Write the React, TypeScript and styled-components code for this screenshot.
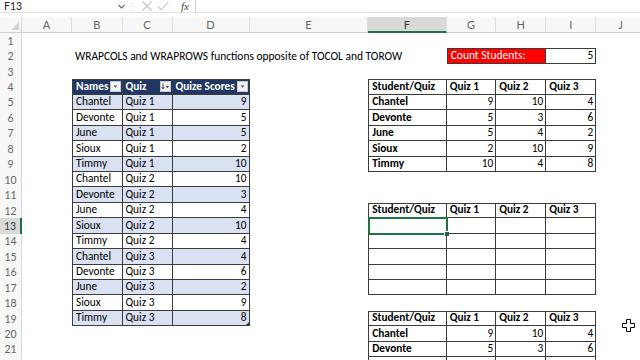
import React from 'react';
import styled, {createGlobalStyle} from 'styled-components';

const COLS = ['A', 'B', 'C', 'D', 'E', 'F', 'G', 'H', 'I', 'J'];
const COL_WIDTHS = [50, 50.5, 50, 77, 118.7, 78.5, 49.5, 50, 50, 50];
const ROW_COUNT = 22;
const LAST_LABELLED_ROW = 21;
const ACTIVE_COL = 'F';
const ACTIVE_ROW = 13;

const NAVY = '#203764';
const BAND = '#d9e1f2';

interface CellData {
    value?: string | number;
    bold?: boolean;
    right?: boolean;
    bg?: string;
    color?: string;
    boxed?: boolean;
    top?: boolean;
    left?: boolean;
    span?: number;
    size?: number;
    filter?: 'down' | 'sort';
    resize?: boolean;
}

const names = ['Chantel', 'Devonte', 'June', 'Sioux', 'Timmy'];
const scores = [9, 5, 5, 2, 10, 10, 3, 4, 10, 4, 4, 6, 2, 9, 8];
const pivot = [
    [9, 10, 4],
    [5, 3, 6],
    [5, 4, 2],
    [2, 10, 9],
    [10, 4, 8],
];

const buildSheet = () => {
    const sheet: Record<string, CellData> = {};

    sheet['B2'] = {value: 'WRAPCOLS and WRAPROWS functions opposite of TOCOL and TOROW', span: 5, size: 11.45};
    sheet['G2'] = {value: 'Count Students:', bg: '#ff0000', color: '#fff', span: 2, boxed: true, top: true, left: true, size: 11.5};
    sheet['I2'] = {value: 5, right: true, boxed: true, top: true};

    // source table
    const head = {bg: NAVY, color: '#fff', bold: true, boxed: true, top: true};
    sheet['B4'] = {...head, value: 'Names', filter: 'down', left: true};
    sheet['C4'] = {...head, value: 'Quiz', filter: 'sort'};
    sheet['D4'] = {...head, value: 'Quize Scores', filter: 'down'};
    scores.forEach((score, i) => {
        const row = 5 + i;
        const bg = i % 2 === 0 ? BAND : '#fff';
        sheet['B' + row] = {value: names[i % 5], bg, boxed: true, left: true};
        sheet['C' + row] = {value: 'Quiz ' + (Math.floor(i / 5) + 1), bg, boxed: true};
        sheet['D' + row] = {value: score, bg, boxed: true, right: true, resize: row === 19};
    });

    // result grids
    const addGrid = (start: number, filled: boolean) => {
        ['Student/Quiz', 'Quiz 1', 'Quiz 2', 'Quiz 3'].forEach((label, c) => {
            sheet[COLS[5 + c] + start] = {value: label, bold: true, boxed: true, top: true, left: c === 0};
        });
        for (let r = 0; r < 5; r++) {
            const row = start + 1 + r;
            // the last row only peeks in at the bottom edge
            const show = filled && row <= LAST_LABELLED_ROW;
            sheet['F' + row] = {value: show ? names[r] : '', bold: true, boxed: true, left: true};
            for (let c = 0; c < 3; c++) {
                sheet[COLS[6 + c] + row] = {value: show ? pivot[r][c] : '', right: true, boxed: true};
            }
        }
    };
    addGrid(4, true);
    addGrid(12, false);
    addGrid(19, true);

    return sheet;
};

const sheet = buildSheet();

const FilterIcon: React.FC<{kind: 'down' | 'sort'}> = ({kind}) => (
    <FilterButton>
        <svg width="9" height="9" viewBox="0 0 9 9">
            {kind === 'sort' && (
                <path d="M2 1.5v5M0.8 5.3L2 6.8 3.2 5.3" stroke="#333" strokeWidth="0.9" fill="none"/>
            )}
            <path d={kind === 'sort' ? 'M4.6 4h3.6L6.4 6.2z' : 'M2.6 3.6h3.8L4.5 5.8z'} fill="#555"/>
        </svg>
    </FilterButton>
);

const App: React.FC = () => {
    const rows = Array.from({length: ROW_COUNT}, (_, i) => i + 1);

    return (
        <Screen>
            <GlobalStyle/>
            <FormulaBar>
                <NameBox>F13</NameBox>
                <svg width="11" height="11" viewBox="0 0 11 11">
                    <path d="M2.5 4l3 3 3-3" stroke="#6b6b6b" strokeWidth="1.2" fill="none"/>
                </svg>
                <BarDots>⋮</BarDots>
                <BarIcons>
                    <svg width="10" height="10" viewBox="0 0 10 10">
                        <path d="M0.5 0.5l9 9M9.5 0.5l-9 9" stroke="#c4c4c4" strokeWidth="1.1"/>
                    </svg>
                    <svg width="12" height="10" viewBox="0 0 12 10">
                        <path d="M0.6 5.2l3.6 3.6L11.4 1" stroke="#c4c4c4" strokeWidth="1.1" fill="none"/>
                    </svg>
                    <Fx>fx</Fx>
                </BarIcons>
                <FormulaInput/>
            </FormulaBar>
            <Sheet>
                <Corner/>
                {COLS.map((col) => (
                    <ColHead key={col} $active={col === ACTIVE_COL}>{col}</ColHead>
                ))}
                {rows.map((row) => {
                    const out: React.ReactNode[] = [
                        <RowHead key={'h' + row} $active={row === ACTIVE_ROW}>
                            {row <= LAST_LABELLED_ROW ? row : ''}
                        </RowHead>,
                    ];
                    let skip = 0;
                    COLS.forEach((col) => {
                        if (skip > 0) {
                            skip--;
                            return;
                        }
                        const addr = col + row;
                        const d = sheet[addr] || {};
                        if (d.span) skip = d.span - 1;
                        out.push(
                            <Cell
                                key={addr}
                                $span={d.span}
                                $size={d.size}
                                $bg={d.bg}
                                $color={d.color}
                                $bold={d.bold}
                                $right={d.right}
                                $boxed={d.boxed}
                                $top={d.top}
                                $left={d.left}
                            >
                                <span>{d.value}</span>
                                {d.filter && <FilterIcon kind={d.filter}/>}
                                {d.resize && <ResizeMark/>}
                                {col === ACTIVE_COL && row === ACTIVE_ROW && (
                                    <Selection>
                                        <FillHandle/>
                                    </Selection>
                                )}
                            </Cell>
                        );
                    });
                    return out;
                })}
            </Sheet>
            <PlusCursor width="13" height="13" viewBox="0 0 13 13">
                <path d="M4.5 0.5h4v4h4v4h-4v4h-4v-4h-4v-4h4z" fill="#fff" stroke="#000" strokeWidth="1"/>
            </PlusCursor>
        </Screen>
    );
};

const GlobalStyle = createGlobalStyle`
  html, body {
    margin: 0;
    padding: 0;
    background: #fff;
    overflow: hidden;
  }

  body {
    font-family: Carlito, Lato, "Liberation Sans", sans-serif;
  }
`;

const Screen = styled.div`
  position: relative;
  width: 640px;
  height: 360px;
  overflow: hidden;
  background: #fff;
`;

const FormulaBar = styled.div`
  height: 12px;
  display: flex;
  align-items: center;
  border-bottom: 1px solid #e1e1e1;
  margin-bottom: 4px;
  overflow: hidden;
  font-family: "Segoe UI", Lato, "Liberation Sans", sans-serif;
`;

const NameBox = styled.div`
  width: 112px;
  padding-left: 4px;
  font-size: 10.5px;
  color: #222;
  line-height: 12px;
`;

const BarDots = styled.div`
  width: 8px;
  color: #c8c8c8;
  font-size: 10px;
  text-align: center;
`;

const BarIcons = styled.div`
  display: flex;
  align-items: center;
  gap: 5px;
  padding-left: 7px;
  width: 53px;
`;

const Fx = styled.span`
  font-family: "Liberation Serif", serif;
  font-style: italic;
  font-size: 11px;
  color: #444;
  margin-left: 7px;
`;

const FormulaInput = styled.div`
  flex: 1;
  height: 12px;
  border-left: 1px solid #d4d4d4;
`;

const Sheet = styled.div`
  display: grid;
  grid-template-columns: 22px ${COL_WIDTHS.map((w) => w + 'px').join(' ')};
  grid-template-rows: 16px;
  grid-auto-rows: 15.45px;
  font-size: 11.3px;
`;

const Corner = styled.div`
  position: relative;
  background: #f7f7f7;
  border-right: 1px solid #d9d9d9;
  border-bottom: 1px solid #d0d0d0;

  &::after {
    content: '';
    position: absolute;
    right: 2px;
    bottom: 2px;
    border-left: 8px solid transparent;
    border-bottom: 8px solid #d2d2d2;
  }
`;

const ColHead = styled.div<{$active?: boolean}>`
  box-sizing: border-box;
  display: flex;
  align-items: center;
  justify-content: center;
  font-family: "Segoe UI", Lato, "Liberation Sans", sans-serif;
  font-size: 11px;
  color: ${(p) => p.$active ? '#3a3a3a' : '#666'};
  background: ${(p) => p.$active ? '#d9d9d9' : '#f7f7f7'};
  border-right: 1px solid #dedede;
  border-bottom: ${(p) => p.$active ? '2px solid #217346' : '1px solid #d0d0d0'};
`;

const RowHead = styled.div<{$active?: boolean}>`
  box-sizing: border-box;
  display: flex;
  align-items: center;
  justify-content: center;
  font-family: "Segoe UI", Lato, "Liberation Sans", sans-serif;
  font-size: 10.5px;
  color: ${(p) => p.$active ? '#3a3a3a' : '#666'};
  background: ${(p) => p.$active ? '#d9d9d9' : '#f7f7f7'};
  border-right: ${(p) => p.$active ? '2px solid #217346' : '1px solid #d9d9d9'};
`;

const Cell = styled.div<{
    $span?: number;
    $size?: number;
    $bg?: string;
    $color?: string;
    $bold?: boolean;
    $right?: boolean;
    $boxed?: boolean;
    $top?: boolean;
    $left?: boolean;
}>`
  position: relative;
  box-sizing: border-box;
  grid-column: span ${(p) => p.$span || 1};
  display: flex;
  align-items: flex-end;
  justify-content: ${(p) => p.$right ? 'flex-end' : 'space-between'};
  padding: 0 2px 1px 3px;
  background: ${(p) => p.$bg || 'transparent'};
  color: ${(p) => p.$color || '#000'};
  font-size: ${(p) => p.$size ? p.$size + 'px' : 'inherit'};
  font-weight: ${(p) => p.$bold ? 700 : 400};
  line-height: 13px;
  white-space: nowrap;
  border-right: ${(p) => p.$boxed ? '1px solid #3c3c3c' : 'none'};
  border-bottom: ${(p) => p.$boxed ? '1px solid #3c3c3c' : 'none'};
  border-top: ${(p) => p.$top ? '1px solid #3c3c3c' : 'none'};
  border-left: ${(p) => p.$left ? '1px solid #3c3c3c' : 'none'};
`;

const FilterButton = styled.span`
  align-self: center;
  display: flex;
  width: 9px;
  height: 9px;
  background: #f1f1f1;
  border: 1px solid #c9c9c9;
  margin-right: -1px;
`;

const ResizeMark = styled.span`
  position: absolute;
  right: 0;
  bottom: 0;
  border-left: 3px solid transparent;
  border-bottom: 3px solid #333;
`;

const Selection = styled.div`
  position: absolute;
  left: -1px;
  top: -1px;
  right: -2px;
  bottom: -2px;
  border: 2px solid #217346;
  pointer-events: none;
`;

const FillHandle = styled.div`
  position: absolute;
  right: -4px;
  bottom: -4px;
  width: 4px;
  height: 4px;
  background: #217346;
  border: 1px solid #fff;
`;

const PlusCursor = styled.svg`
  position: absolute;
  left: 622px;
  top: 319px;
`;

export default App;
